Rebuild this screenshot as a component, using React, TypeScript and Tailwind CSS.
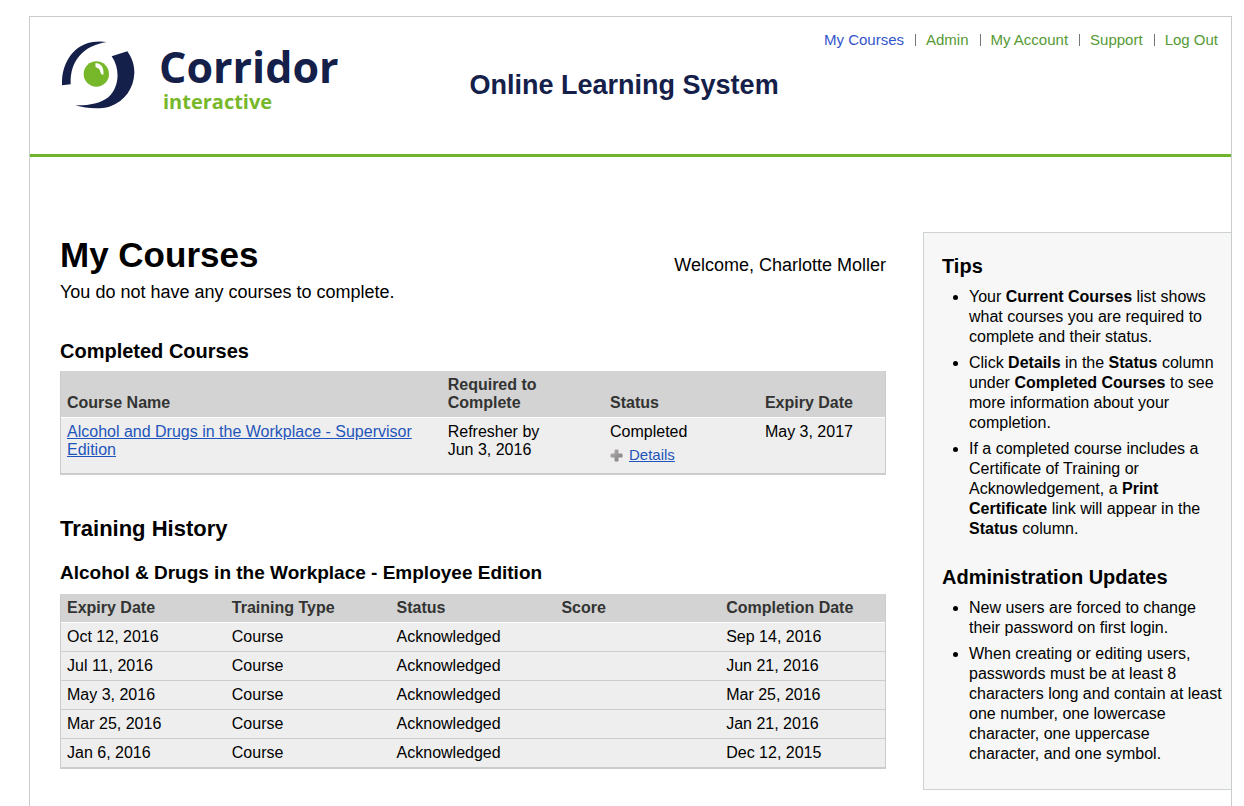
import type { ReactNode } from 'react';

interface NavItem {
    label: string;
    active?: boolean;
}

interface HistoryRow {
    expiry: string;
    type: string;
    status: string;
    score: string;
    completed: string;
}

const navItems: NavItem[] = [
    { label: 'My Courses', active: true },
    { label: 'Admin' },
    { label: 'My Account' },
    { label: 'Support' },
    { label: 'Log Out' },
];

const history: HistoryRow[] = [
    { expiry: 'Oct 12, 2016', type: 'Course', status: 'Acknowledged', score: '', completed: 'Sep 14, 2016' },
    { expiry: 'Jul 11, 2016', type: 'Course', status: 'Acknowledged', score: '', completed: 'Jun 21, 2016' },
    { expiry: 'May 3, 2016', type: 'Course', status: 'Acknowledged', score: '', completed: 'Mar 25, 2016' },
    { expiry: 'Mar 25, 2016', type: 'Course', status: 'Acknowledged', score: '', completed: 'Jan 21, 2016' },
    { expiry: 'Jan 6, 2016', type: 'Course', status: 'Acknowledged', score: '', completed: 'Dec 12, 2015' },
];

const historyColumns = ['Expiry Date', 'Training Type', 'Status', 'Score', 'Completion Date'];

const Logo = () => (
    <a href="#" className="flex shrink-0 items-start gap-6">
        <svg viewBox="36 31 219 204" className="h-[68px] w-[73px]" aria-hidden="true">
            <path
                d="M36 164 C34 108 60 58 106 40 C128 32 150 31 170 34 C136 40 108 52 88 76 C68 100 61 126 62 161 Z"
                fill="#14204a"
            />
            <path
                d="M185 77 L232 62 C246 82 254 104 253 128 C251 172 226 212 178 228 C146 237 108 233 76 224 C114 225 150 220 175 200 C210 168 210 112 185 77 Z"
                fill="#14204a"
            />
            <circle cx="139" cy="130" r="38" fill="#76b82a" />
            <path d="M136 98 C150 94 164 110 160 132 C156 132 154 130 152 126 C150 116 146 112 137 110 Z" fill="#fff" />
        </svg>
        <span className="flex flex-col font-['Open_Sans','Noto_Sans',sans-serif] font-bold">
            <span className="text-[43px] leading-[52px] text-[#14204a]">Corridor</span>
            <span className="pl-1 text-[20px] leading-[18px] text-[#76b82a]">interactive</span>
        </span>
    </a>
);

const PlusIcon = () => (
    <svg viewBox="0 0 13 13" className="h-[13px] w-[13px] shrink-0" aria-hidden="true">
        <defs>
            <linearGradient id="plus" x1="0" y1="0" x2="1" y2="1">
                <stop offset="0" stopColor="#b8b4b8" />
                <stop offset="1" stopColor="#7c787c" />
            </linearGradient>
        </defs>
        <path
            d="M5.5 0.5 H7.5 Q8.5 0.5 8.5 1.5 V4.5 H11.5 Q12.5 4.5 12.5 5.5 V7.5 Q12.5 8.5 11.5 8.5 H8.5 V11.5 Q8.5 12.5 7.5 12.5 H5.5 Q4.5 12.5 4.5 11.5 V8.5 H1.5 Q0.5 8.5 0.5 7.5 V5.5 Q0.5 4.5 1.5 4.5 H4.5 V1.5 Q4.5 0.5 5.5 0.5 Z"
            fill="url(#plus)"
        />
    </svg>
);

const Th = ({ children, className = '' }: { children: ReactNode; className?: string }) => (
    <th scope="col" className={`border-b border-white bg-[#d2d3d2] px-[6px] py-[5px] text-left align-bottom font-bold text-[#333] ${className}`}>
        {children}
    </th>
);

const Header = () => (
    <header className="flex items-start border-b-[3px] border-[#6fb52c] pr-[13px] pb-[43px] pl-8">
        <div className="pt-6">
            <Logo />
        </div>
        <div className="ml-[131px] pt-[52px] text-[27px] leading-8 font-bold whitespace-nowrap text-[#14204a]">
            Online Learning System
        </div>
        <nav className="ml-auto pt-[14px]">
            <ul className="flex items-center text-[15px] leading-[18px] whitespace-nowrap">
                {navItems.map((item, i) => (
                    <li key={item.label} className="flex items-center">
                        {i > 0 && <span className="mr-[10px] ml-[11px] h-3 w-px bg-[#777]" />}
                        <a href="#" className={item.active ? 'text-[#3355cc]' : 'text-[#559a33]'}>
                            {item.label}
                        </a>
                    </li>
                ))}
            </ul>
        </nav>
    </header>
);

const CompletedCourses = () => (
    <section className="pt-[35px]">
        <h2 className="text-[20px] leading-6 font-bold">Completed Courses</h2>
        <table className="mt-2 w-full table-fixed border-separate border-spacing-0 border-x border-b-2 border-[#cbcdcb] bg-[#eeeeee] leading-[18px]">
            <thead>
                <tr>
                    <Th className="w-[46.2%]">Course Name</Th>
                    <Th className="w-[19.7%]">Required to<br />Complete</Th>
                    <Th className="w-[18.8%]">Status</Th>
                    <Th className="w-[15.3%]">Expiry Date</Th>
                </tr>
            </thead>
            <tbody>
                <tr className="align-top *:px-[6px] *:pt-[5px] *:pb-[9px]">
                    <td>
                        <a href="#" className="text-[#1f55bb] underline">
                            Alcohol and Drugs in the Workplace - Supervisor Edition
                        </a>
                    </td>
                    <td>Refresher by<br />Jun 3, 2016</td>
                    <td>
                        Completed
                        <div className="mt-[5px] flex items-center gap-[6px]">
                            <PlusIcon />
                            <a href="#" className="text-[15px] text-[#1f55bb] underline">Details</a>
                        </div>
                    </td>
                    <td>May 3, 2017</td>
                </tr>
            </tbody>
        </table>
    </section>
);

const TrainingHistory = () => (
    <section className="pt-10">
        <h2 className="text-[22px] leading-7 font-bold">Training History</h2>
        <h3 className="mt-[18px] text-[19px] leading-6 font-bold">Alcohol &amp; Drugs in the Workplace - Employee Edition</h3>
        <table className="mt-[9px] w-full table-fixed border-separate border-spacing-0 border-x border-b-2 border-[#cbcdcb] bg-[#eeeeee] leading-[18px]">
            <thead>
                <tr>
                    {historyColumns.map((column) => (
                        <Th key={column} className="w-1/5">{column}</Th>
                    ))}
                </tr>
            </thead>
            <tbody>
                {history.map((row) => (
                    <tr key={row.expiry} className="*:border-b *:border-[#cbcdcb] *:px-[6px] *:py-[5px] last:*:border-b-0">
                        <td>{row.expiry}</td>
                        <td>{row.type}</td>
                        <td>{row.status}</td>
                        <td>{row.score}</td>
                        <td>{row.completed}</td>
                    </tr>
                ))}
            </tbody>
        </table>
    </section>
);

const Sidebar = () => (
    <aside className="mt-[75px] mb-4 w-[308px] shrink-0 border-y border-l border-[#cdd3cd] bg-[#f6f7f6] pt-[21px] pr-2 pb-[25px] pl-[18px] leading-5">
        <h2 className="text-[20px] leading-6 font-bold">Tips</h2>
        <ul className="mt-[9px] list-disc space-y-[6px] pl-[27px]">
            <li>
                Your <b>Current Courses</b> list shows what courses you are required to complete and their status.
            </li>
            <li>
                Click <b>Details</b> in the <b>Status</b> column under <b>Completed Courses</b> to see more
                information about your completion.
            </li>
            <li>
                If a completed course includes a Certificate of Training or Acknowledgement, a{' '}
                <b>Print Certificate</b> link will appear in the <b>Status</b> column.
            </li>
        </ul>
        <h2 className="mt-[26px] text-[20px] leading-6 font-bold">Administration Updates</h2>
        <ul className="mt-[9px] list-disc space-y-[6px] pl-[27px]">
            <li>New users are forced to change their password on first login.</li>
            <li>
                When creating or editing users, passwords must be at least 8 characters long and contain at least
                one number, one lowercase character, one uppercase character, and one symbol.
            </li>
        </ul>
    </aside>
);

const App = () => {
    return (
        <div className="min-h-screen bg-white pt-4 pr-3 pl-[29px] font-['Liberation_Sans',Arial,sans-serif] text-[16px] text-black">
            <div className="min-h-[790px] border-x border-t border-[#c8cdc8]">
                <Header />
                <div className="flex items-start">
                    <main className="min-w-0 grow pt-[78px] pr-[37px] pl-[30px]">
                        <div className="flex items-end justify-between">
                            <h1 className="text-[35px] leading-10 font-bold">My Courses</h1>
                            <p className="text-[18px] leading-5">Welcome, Charlotte Moller</p>
                        </div>
                        <p className="mt-[5px] text-[18px] leading-6">You do not have any courses to complete.</p>
                        <CompletedCourses />
                        <TrainingHistory />
                    </main>
                    <Sidebar />
                </div>
            </div>
        </div>
    );
};

export default App;
